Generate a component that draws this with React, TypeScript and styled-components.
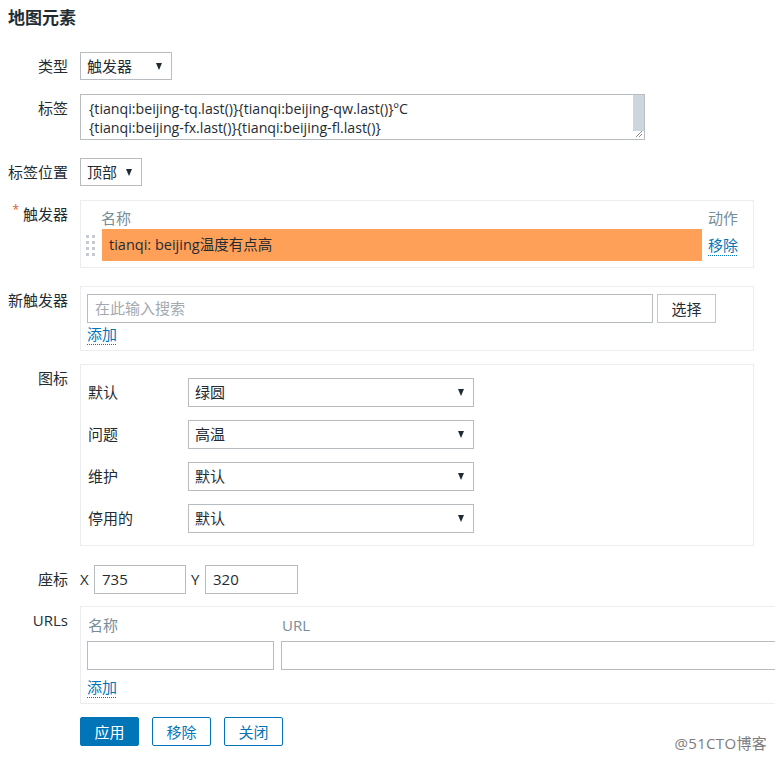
import { Fragment } from "react";
import styled, { createGlobalStyle } from "styled-components";

const GlobalStyle = createGlobalStyle`
  html, body {
    margin: 0;
    padding: 0;
    background: #fff;
    overflow: hidden;
  }
  body {
    font-family: "Open Sans", "Noto Sans CJK SC", sans-serif;
    font-size: 15px;
    color: #1f2c33;
  }
  * {
    box-sizing: border-box;
  }
`;

const Page = styled.div`
  position: relative;
  width: 775px;
  height: 763px;
  overflow: hidden;
  padding: 8px 0 0 8px;
`;

const Title = styled.h1`
  margin: 0;
  font-size: 17px;
  font-weight: 700;
  line-height: 20px;
`;

const Row = styled.div<{ $top: number }>`
  display: grid;
  grid-template-columns: 60px auto;
  column-gap: 12px;
  align-items: start;
  margin-top: ${(p) => p.$top}px;
`;

const Label = styled.div`
  text-align: right;
  white-space: nowrap;
  line-height: 29px;
`;

const Star = styled.span`
  color: #e0582f;
  font-size: 12px;
  vertical-align: top;
  line-height: 20px;
  margin-right: 4px;
`;

const Select = styled.div<{ $w: number }>`
  display: flex;
  align-items: center;
  justify-content: space-between;
  width: ${(p) => p.$w}px;
  height: ${(p) => (p.$w > 200 ? 29 : 28)}px;
  padding: 0 9px 0 6px;
  border: 1px solid #b7bcc0;
  background: #fff;
  line-height: 1;

  &::after {
    content: "";
    border-left: 3.5px solid transparent;
    border-right: 3.5px solid transparent;
    border-top: 7px solid #1f2c33;
  }
`;

const TextBox = styled.div`
  position: relative;
  width: 565px;
  height: 46px;
  border: 1px solid #b7bcc0;
  padding: 4px 8px;
  font-size: 14.2px;
  line-height: 19px;
  white-space: nowrap;
`;

const ScrollThumb = styled.div`
  position: absolute;
  top: 0;
  right: 0;
  width: 11px;
  height: 36px;
  background: #cdd5dd;
`;

const Grip = styled.svg`
  position: absolute;
  right: 1px;
  bottom: 1px;
`;

const Panel = styled.div<{ $w?: number }>`
  width: ${(p) => p.$w ?? 674}px;
  border: 1px solid #ebeef0;
  background: #fff;
`;

const TriggerTable = styled(Panel)`
  display: grid;
  grid-template-columns: 20px 601px 1fr;
  grid-template-rows: 21px 32px;
  padding: 7px 0 6px;
`;

const HeadCell = styled.div<{ $pad?: number }>`
  color: #768d99;
  line-height: 21px;
  padding-left: ${(p) => p.$pad ?? 0}px;
`;

const Handle = styled.div`
  display: flex;
  align-items: center;
  padding-left: 5px;
`;

const TriggerBar = styled.div`
  background: #ffa059;
  line-height: 32px;
  padding-left: 7px;
  margin-left: 1px;
  font-size: 14.5px;
`;

const ActionCell = styled.div`
  line-height: 32px;
  padding-left: 6px;
`;

const Link = styled.a`
  color: #0275b8;
  cursor: pointer;
  text-decoration: underline dotted;
  text-underline-offset: 4px;
  text-decoration-thickness: 1px;
`;

const LinkLine = styled.div<{ $top: number }>`
  line-height: 22px;
  margin-top: ${(p) => p.$top}px;
`;

const SearchPanel = styled(Panel)`
  padding: 7px 6px 5px;
`;

const InputRow = styled.div`
  display: flex;
  gap: 4px;
`;

const Input = styled.div<{ $w?: number; $muted?: boolean }>`
  width: ${(p) => (p.$w ? `${p.$w}px` : "100%")};
  height: 29px;
  border: 1px solid #b7bcc0;
  padding: 0 7px;
  line-height: 27px;
  color: ${(p) => (p.$muted ? "#a3aaaf" : "#1f2c33")};
  background: #fff;
`;

const PlainButton = styled.button`
  width: 59px;
  height: 29px;
  border: 1px solid #c2c7cb;
  background: #fff;
  color: #1f2c33;
  font: inherit;
  padding: 0;
`;

const IconPanel = styled(Panel)`
  display: grid;
  grid-template-columns: 100px 286px;
  row-gap: 13px;
  padding: 13px 0 12px 7px;
`;

const IconLabel = styled.div`
  line-height: 29px;
`;

const Coords = styled.div`
  display: flex;
  align-items: center;
`;

const Axis = styled.span<{ $ml: number }>`
  width: 10px;
  margin: 0 4px 0 ${(p) => p.$ml}px;
  line-height: 29px;
`;

const UrlPanel = styled(Panel)`
  display: grid;
  grid-template-columns: 187px 500px;
  column-gap: 7px;
  padding: 7px 6px 5px;
`;

const UrlHead = styled.div`
  color: #768d99;
  line-height: 22px;
  margin-bottom: 5px;
  padding-left: 1px;
`;

const Buttons = styled.div`
  display: flex;
  gap: 13px;
  margin: 13px 0 0 72px;
`;

const Button = styled.button<{ $primary?: boolean }>`
  width: 59px;
  height: 29px;
  border: 1px solid #0275b8;
  border-radius: 2px;
  background: ${(p) => (p.$primary ? "#0275b8" : "#fff")};
  color: ${(p) => (p.$primary ? "#fff" : "#0275b8")};
  font: inherit;
  padding: 0;
`;

const Watermark = styled.div`
  position: absolute;
  right: 8px;
  bottom: 10px;
  color: #7d7d7d;
  font-size: 15px;
  letter-spacing: 0.3px;
  text-shadow: 0 0 2px #fff;
`;

const icons = [
  ["默认", "绿圆"],
  ["问题", "高温"],
  ["维护", "默认"],
  ["停用的", "默认"],
];

export default function App() {
  return (
    <Page>
      <GlobalStyle />
      <Title>地图元素</Title>

      <Row $top={24}>
        <Label>类型</Label>
        <Select $w={92}>触发器</Select>
      </Row>

      <Row $top={13}>
        <Label>标签</Label>
        <TextBox>
          {"{tianqi:beijing-tq.last()}{tianqi:beijing-qw.last()}ºC"}
          <br />
          {"{tianqi:beijing-fx.last()}{tianqi:beijing-fl.last()}"}
          <ScrollThumb />
          <Grip width="9" height="8" viewBox="0 0 9 8">
            <path d="M2 7 L8 1 M5 7 L8 4" stroke="#8a9096" strokeWidth="1" />
          </Grip>
        </TextBox>
      </Row>

      <Row $top={18}>
        <Label>标签位置</Label>
        <Select $w={62}>顶部</Select>
      </Row>

      <Row $top={13}>
        <Label>
          <Star>*</Star>触发器
        </Label>
        <TriggerTable>
          <div />
          <HeadCell>名称</HeadCell>
          <HeadCell $pad={6}>动作</HeadCell>
          <Handle>
            <svg width="9" height="24" viewBox="0 0 9 24">
              {[0, 1, 2, 3].map((r) =>
                [0, 1].map((c) => (
                  <rect
                    key={`${r}-${c}`}
                    x={c * 6}
                    y={r * 6 + 2}
                    width="3"
                    height="3"
                    fill="#c5cbd0"
                  />
                ))
              )}
            </svg>
          </Handle>
          <TriggerBar>tianqi: beijing温度有点高</TriggerBar>
          <ActionCell>
            <Link>移除</Link>
          </ActionCell>
        </TriggerTable>
      </Row>

      <Row $top={18}>
        <Label>新触发器</Label>
        <SearchPanel>
          <InputRow>
            <Input $w={566} $muted>
              在此输入搜索
            </Input>
            <PlainButton>选择</PlainButton>
          </InputRow>
          <LinkLine $top={0}>
            <Link>添加</Link>
          </LinkLine>
        </SearchPanel>
      </Row>

      <Row $top={13}>
        <Label>图标</Label>
        <IconPanel>
          {icons.map(([name, value]) => (
            <Fragment key={name}>
              <IconLabel>{name}</IconLabel>
              <Select $w={286}>{value}</Select>
            </Fragment>
          ))}
        </IconPanel>
      </Row>

      <Row $top={19}>
        <Label>座标</Label>
        <Coords>
          <Axis $ml={0}>X</Axis>
          <Input $w={92}>735</Input>
          <Axis $ml={5}>Y</Axis>
          <Input $w={93}>320</Input>
        </Coords>
      </Row>

      <Row $top={12}>
        <Label>URLs</Label>
        <UrlPanel $w={760}>
          <UrlHead>名称</UrlHead>
          <UrlHead>URL</UrlHead>
          <Input />
          <Input />
          <LinkLine $top={6}>
            <Link>添加</Link>
          </LinkLine>
        </UrlPanel>
      </Row>

      <Buttons>
        <Button $primary>应用</Button>
        <Button>移除</Button>
        <Button>关闭</Button>
      </Buttons>

      <Watermark>@51CTO博客</Watermark>
    </Page>
  );
}
